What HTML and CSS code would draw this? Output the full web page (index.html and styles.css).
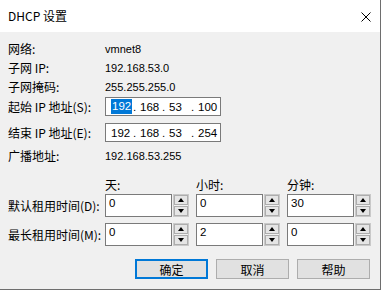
FILE: index.html
```html
<!DOCTYPE html>
<html lang="zh-CN">
<head>
    <meta charset="UTF-8">
    <meta name="viewport" content="width=device-width, initial-scale=1.0">
    <title>DHCP 设置</title>
    <link rel="stylesheet" href="styles.css">
</head>
<body>
    <div class="window">
        <!-- Title bar -->
        <div class="titlebar">
            <span class="title">DHCP 设置</span>
            <svg class="close" width="10" height="10" viewBox="0 0 10 10">
                <path d="M0.5 0.5 L9.5 9.5 M9.5 0.5 L0.5 9.5" stroke="#000" stroke-width="1" fill="none"/>
            </svg>
        </div>

        <div class="content">
            <!-- Info -->
            <div class="row info">
                <span class="label">网络:</span>
                <span class="value">vmnet8</span>
            </div>
            <div class="row info">
                <span class="label">子网 IP:</span>
                <span class="value">192.168.53.0</span>
            </div>
            <div class="row info">
                <span class="label">子网掩码:</span>
                <span class="value">255.255.255.0</span>
            </div>

            <!-- IP range -->
            <div class="row ip-row first">
                <span class="label">起始 IP 地址(S):</span>
                <div class="ip-box">
                    <span class="seg"><span class="sel">192</span><span class="caret"></span></span>
                    <span class="dot">.</span><span class="seg">168</span>
                    <span class="dot">.</span><span class="seg">53</span>
                    <span class="dot">.</span><span class="seg">100</span>
                </div>
            </div>
            <div class="row ip-row">
                <span class="label">结束 IP 地址(E):</span>
                <div class="ip-box">
                    <span class="seg">192</span>
                    <span class="dot">.</span><span class="seg">168</span>
                    <span class="dot">.</span><span class="seg">53</span>
                    <span class="dot">.</span><span class="seg">254</span>
                </div>
            </div>
            <div class="row info broadcast">
                <span class="label">广播地址:</span>
                <span class="value">192.168.53.255</span>
            </div>

            <!-- Lease times -->
            <div class="row lease-head">
                <span class="label"></span>
                <span class="col-head">天:</span>
                <span class="col-head">小时:</span>
                <span class="col-head">分钟:</span>
            </div>
            <div class="row lease">
                <span class="label">默认租用时间(D):</span>
                <div class="spin"><div class="spin-input">0</div><div class="spin-btns"><span class="up"></span><span class="down"></span></div></div>
                <div class="spin"><div class="spin-input">0</div><div class="spin-btns"><span class="up"></span><span class="down"></span></div></div>
                <div class="spin"><div class="spin-input">30</div><div class="spin-btns"><span class="up"></span><span class="down"></span></div></div>
            </div>
            <div class="row lease second">
                <span class="label">最长租用时间(M):</span>
                <div class="spin"><div class="spin-input">0</div><div class="spin-btns"><span class="up"></span><span class="down"></span></div></div>
                <div class="spin"><div class="spin-input">2</div><div class="spin-btns"><span class="up"></span><span class="down"></span></div></div>
                <div class="spin"><div class="spin-input">0</div><div class="spin-btns"><span class="up"></span><span class="down"></span></div></div>
            </div>

            <!-- Buttons -->
            <div class="buttons">
                <button class="btn default">确定</button>
                <button class="btn">取消</button>
                <button class="btn">帮助</button>
            </div>
        </div>
    </div>
</body>
</html>
```

FILE: styles.css
```css
body {
    margin: 0;
    background: #fff;
    font-family: "Noto Sans CJK SC", "Liberation Sans", sans-serif;
    font-size: 12px;
    color: #000;
}
.window {
    width: 380px;
    height: 289px;
    border-right: 1px solid #6e6e6e;
    border-bottom: 1px solid #6e6e6e;
    background: #f0f0f0;
    display: flex;
    flex-direction: column;
}
.titlebar {
    height: 32px;
    background: #fff;
    display: flex;
    align-items: center;
    justify-content: space-between;
    padding: 0 9px 0 8px;
}
.title {
    font-size: 12px;
    line-height: 16px;
}
.close {
    display: block;
    margin-top: 1px;
}
.content {
    padding: 7px 0 0 8px;
}
.row {
    display: flex;
    align-items: center;
}
.label {
    width: 97px;
    flex: none;
    white-space: nowrap;
    line-height: 19px;
}
.info {
    height: 19px;
}
.value {
    font-family: "Liberation Sans", sans-serif;
    font-size: 11px;
}
.ip-row {
    height: 19px;
    margin-top: 7px;
}
.ip-row.first {
    margin-top: 1px;
}
.ip-box {
    width: 109px;
    height: 17px;
    border: 1px solid #7a7a7a;
    background: #fff;
    display: flex;
    align-items: center;
    padding-left: 5px;
    font-family: "Liberation Sans", sans-serif;
    font-size: 11.5px;
}
.seg {
    display: flex;
    align-items: center;
    width: 21px;
}
.dot {
    width: 7px;
    text-align: left;
    padding-left: 1px;
}
.sel {
    background: #0078d7;
    color: #fff;
    padding: 0 1px;
    line-height: 15px;
}
.caret {
    width: 1px;
    height: 15px;
    background: #c8640a;
}
.broadcast {
    margin-top: 4px;
}
.lease-head {
    height: 19px;
    margin-top: 10px;
}
.col-head {
    width: 91px;
    line-height: 19px;
}
.lease {
    height: 23px;
}
.lease.second {
    margin-top: 6px;
}
.spin {
    display: flex;
    gap: 1px;
    margin-right: 7px;
}
.spin-input {
    width: 62px;
    height: 21px;
    border: 1px solid #7a7a7a;
    background: #fff;
    padding-left: 3px;
    font-family: "Liberation Sans", sans-serif;
    font-size: 11.5px;
    line-height: 17px;
}
.spin-btns {
    width: 14px;
    height: 21px;
    border: 1px solid #c9c9c9;
    display: flex;
    flex-direction: column;
    gap: 1px;
}
.spin-btns span {
    flex: 1;
    background: #e5e5e5;
    border: 1px solid #adadad;
    display: flex;
    align-items: center;
    justify-content: center;
}
.spin-btns .up::before {
    content: "";
    border-left: 3.5px solid transparent;
    border-right: 3.5px solid transparent;
    border-bottom: 4px solid #000;
}
.spin-btns .down::before {
    content: "";
    border-left: 3.5px solid transparent;
    border-right: 3.5px solid transparent;
    border-top: 4px solid #000;
}
.buttons {
    display: flex;
    justify-content: flex-end;
    gap: 8px;
    margin-top: 13px;
    padding-right: 10px;
}
.btn {
    width: 73px;
    height: 20px;
    padding: 0;
    background: #e1e1e1;
    border: 1px solid #adadad;
    font-family: "Noto Sans CJK SC", sans-serif;
    font-size: 12px;
    color: #000;
}
.btn.default {
    border: 2px solid #0078d7;
}
```
